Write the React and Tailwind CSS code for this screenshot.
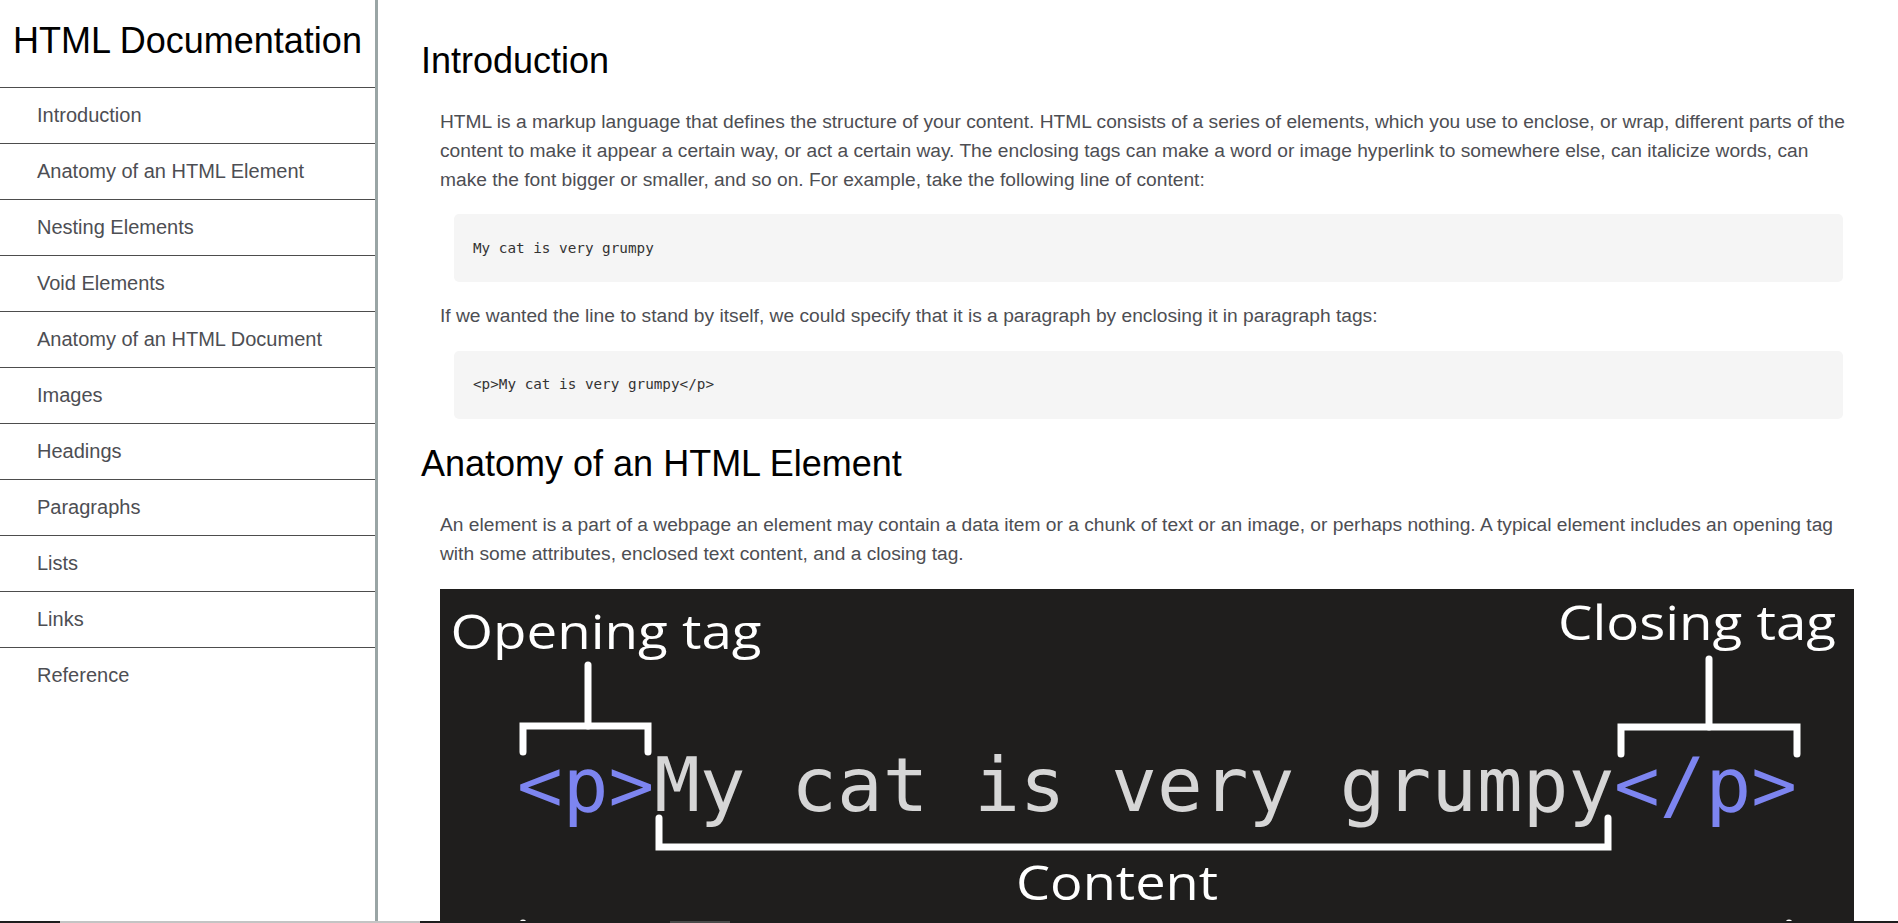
import React from "react";

const navItems = [
  "Introduction",
  "Anatomy of an HTML Element",
  "Nesting Elements",
  "Void Elements",
  "Anatomy of an HTML Document",
  "Images",
  "Headings",
  "Paragraphs",
  "Lists",
  "Links",
  "Reference",
];

const Heading = ({ children }) => (
  <h2 className="text-[36px] leading-[41px] font-normal text-black">{children}</h2>
);

const Para = ({ children, className = "" }) => (
  <p className={"ml-[19px] text-[19.2px] leading-[28.8px] text-[#4d4e53] " + className}>{children}</p>
);

const Code = ({ children, className = "" }) => (
  <pre
    className={
      "ml-[33px] mr-[11px] h-[68px] flex items-center px-[19px] rounded-[5px] bg-[#f5f5f5] text-[14.3px] text-[#333] font-['DejaVu_Sans_Mono',monospace] " +
      className
    }
  >
    {children}
  </pre>
);

const ElementDiagram = () => (
  <svg viewBox="0 0 1414 470" width="1414" height="470" className="block w-full h-auto bg-[#1f1e1d]">
    <g fill="#ffffff" fontFamily="'Open Sans', sans-serif" fontSize="48">
      <text x="10.5" y="60" textLength="311" lengthAdjust="spacingAndGlyphs">Opening tag</text>
      <text x="1118" y="51" textLength="278" lengthAdjust="spacingAndGlyphs">Closing tag</text>
      <text x="576" y="311" textLength="202" lengthAdjust="spacingAndGlyphs">Content</text>
      <text x="620" y="455" textLength="190" lengthAdjust="spacingAndGlyphs">Element</text>
    </g>
    <g stroke="#ffffff" strokeWidth="7" fill="none" strokeLinecap="round" strokeLinejoin="miter">
      <path d="M148 76 V137" />
      <path d="M83 163 V137 H208 V163" />
      <path d="M1269 70 V138" />
      <path d="M1181 165 V138 H1357 V165" />
      <path d="M219 229 V258 H1168 V229" />
      <path d="M83 334 V380 H1349 V334" />
      <path d="M716 380 V410" />
    </g>
    <text
      x="77"
      y="222"
      fontFamily="'DejaVu Sans Mono', monospace"
      fontSize="75"
      textLength="1280"
      lengthAdjust="spacingAndGlyphs"
      fill="#d6d6d6"
    >
      <tspan fill="#7d85f0">&lt;p&gt;</tspan>
      <tspan>My cat is very grumpy</tspan>
      <tspan fill="#7d85f0">&lt;/p&gt;</tspan>
    </text>
  </svg>
);

export default function App() {
  return (
    <div className="flex h-screen overflow-hidden bg-white font-['Liberation_Sans',Arial,sans-serif]">
      {/* sidebar */}
      <nav className="w-[378px] shrink-0 h-full border-r-[3px] border-[#9aa5a5]">
        <header className="h-[87px] pt-[20px] text-center">
          <h1 className="text-[36px] leading-[41px] font-normal text-black">HTML Documentation</h1>
        </header>
        <ul>
          {navItems.map((item) => (
            <li
              key={item}
              className="border-t border-[#4d4d4d] pt-[16px] pb-[16px] pl-[37px] text-[20px] leading-[23px] text-[#4d4e53]"
            >
              {item}
            </li>
          ))}
        </ul>
      </nav>

      {/* main content */}
      <main className="flex-1 pl-[43px] pr-[44px] pt-[40px]">
        <section>
          <Heading>Introduction</Heading>
          <Para className="mt-[27px]">
            HTML is a markup language that defines the structure of your content. HTML consists of a series of
            elements, which you use to enclose, or wrap, different parts of the content to make it appear a certain
            way, or act a certain way. The enclosing tags can make a word or image hyperlink to somewhere else, can
            italicize words, can make the font bigger or smaller, and so on. For example, take the following line of
            content:
          </Para>
          <Code className="mt-[20px]">My cat is very grumpy</Code>
          <Para className="mt-[20px]">
            If we wanted the line to stand by itself, we could specify that it is a paragraph by enclosing it in
            paragraph tags:
          </Para>
          <Code className="mt-[20px]">{"<p>My cat is very grumpy</p>"}</Code>
        </section>

        <section className="mt-[24px]">
          <Heading>Anatomy of an HTML Element</Heading>
          <Para className="mt-[27px]">
            An element is a part of a webpage an element may contain a data item or a chunk of text or an image, or
            perhaps nothing. A typical element includes an opening tag with some attributes, enclosed text content,
            and a closing tag.
          </Para>
          <div className="ml-[19px] mt-[20px]">
            <ElementDiagram />
          </div>
        </section>
      </main>

      {/* horizontal scrollbar sliver at the bottom edge */}
      <div className="fixed bottom-0 left-0 right-0 h-[2px] bg-[#1e1e1e]">
        <div className="absolute left-[60px] w-[360px] h-full bg-[#c4c4c4]" />
        <div className="absolute left-[670px] w-[60px] h-full bg-[#4a4a4a]" />
      </div>
    </div>
  );
}
